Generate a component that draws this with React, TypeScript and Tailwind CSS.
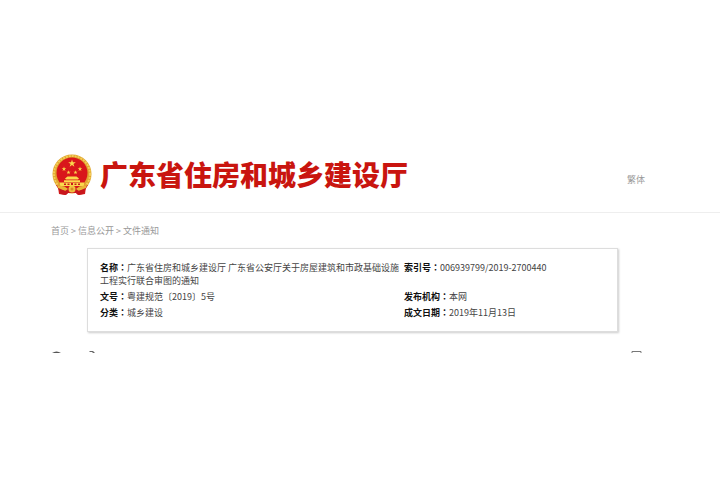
import React from 'react';

interface FieldProps {
    label: string;
    children: React.ReactNode;
}

const Field: React.FC<FieldProps> = ({ label, children }) => (
    <div>
        <dt className="inline font-bold text-[#111111]">
            {label}
            <span className="font-['Noto_Sans_CJK_TC',sans-serif]" lang="zh-TW">：</span>
        </dt>
        <dd className="inline">{children}</dd>
    </div>
);

const STAR = 'M0 -1 .23 -.31 .95 -.31 .36 .12 .59 .81 0 .38 -.59 .81 -.36 .12 -.95 -.31 -.23 -.31Z';

const Emblem: React.FC = () => (
    <svg className="h-[43px] w-10 shrink-0" viewBox="0 0 40 43" aria-hidden="true">
        <circle cx="20" cy="21" r="19.5" fill="#e0a42e" />
        <circle cx="20" cy="21" r="18" fill="none" stroke="#f3cd58" strokeWidth="2" strokeDasharray="2 1" />
        <path d="M6 34h28l-1 7-6 1-3-2h-8l-3 2-6-1Z" fill="#cf1a1c" />
        <circle cx="20" cy="20" r="15.5" fill="#d9161b" />
        <g fill="#fbd94d">
            <path d={STAR} transform="translate(20 10.5) scale(4)" />
            <path d={STAR} transform="translate(12 16) scale(2.4)" />
            <path d={STAR} transform="translate(16.5 19.5) scale(2.2)" />
            <path d={STAR} transform="translate(23.5 19.5) scale(2.2)" />
            <path d={STAR} transform="translate(28 16) scale(2.4)" />
            <path d="M13 25.500 15.500 23.500h9l2.500 2-1 1H14ZM12 27.200h16V29H12ZM8 29.500h24V33H8Z" />
        </g>
        <path d="M12 30.500h2V32h-2Zm3.500 0h2V32h-2Zm3.500-.5h2v2h-2Zm3.500.5h2V32h-2Zm3.500 0h2V32h-2Z" fill="#c8161d" />
        <path d="M4 32c5 1 9 2 12 3h8c3-1 7-2 12-3l-3 5-9 1-4-1-4 1-9-1Z" fill="#c8161d" />
        <path d="M5 32c6 1 9 2 11 4l-3 2c-2-1-4-2-7-3ZM35 32c-6 1-9 2-11 4l3 2c2-1 4-2 7-3Z" fill="#e9b536" />
        <circle cx="20" cy="36" r="3.500" fill="#f0c040" />
        <circle cx="20" cy="36" r="1.500" fill="#d98a24" />
        <path d="M8 37c4 0 6 1 9 2l-3 3-5-1ZM32 37c-4 0-6 1-9 2l3 3 5-1Z" fill="#c8161d" />
    </svg>
);

export default function App() {
    return (
        <div className="min-h-screen bg-white pt-[153px] font-['Noto_Sans_CJK_SC',sans-serif] text-[9px] leading-[13px] text-[#444444]">
            <header className="flex h-[60px] items-start justify-between border-b border-[#eeeeee] pr-[75px] pl-[52px]">
                <div className="flex items-center gap-2">
                    <Emblem />
                    <h1 className="text-[28px] leading-[43px] font-black text-[#c9150f]">广东省住房和城乡建设厅</h1>
                </div>
                <a href="#" className="mt-5 text-[#999999]">繁体</a>
            </header>

            <main className="pr-[66px] pl-[51px]">
                <nav className="flex gap-[2px] pt-[11px] text-[#999999]">
                    <a href="#">首页</a>
                    <span>&gt;</span>
                    <a href="#">信息公开</a>
                    <span>&gt;</span>
                    <a href="#">文件通知</a>
                </nav>

                <dl className="mx-9 mt-[11px] grid grid-cols-[304px_1fr] gap-y-[3px] border border-[#dddddd] py-3 pl-3 shadow-[1px_1px_2px_#cccccc]">
                    <Field label="名称">
                        广东省住房和城乡建设厅 广东省公安厅关于房屋建筑和市政基础设施工程实行联合审图的通知
                    </Field>
                    <Field label="索引号">006939799/2019-2700440</Field>
                    <Field label="文号">粤建规范〔2019〕5号</Field>
                    <Field label="发布机构">本网</Field>
                    <Field label="分类">城乡建设</Field>
                    <Field label="成文日期">2019年11月13日</Field>
                </dl>

                {/* top edge of the toolbar icons */}
                <div className="mt-[19px] flex justify-between pr-3">
                    <div className="flex gap-[27px]">
                        <svg className="h-[2px] w-[11px]" viewBox="0 0 11 2" aria-hidden="true">
                            <path d="M1 2Q5.500-1 10 2Z" fill="#555555" />
                        </svg>
                        <svg className="h-[2px] w-[6px]" viewBox="0 0 6 2" aria-hidden="true">
                            <path d="M1 0h3l2 2H4L3 1H0Z" fill="#666666" />
                        </svg>
                    </div>
                    <svg className="h-[2px] w-[11px]" viewBox="0 0 11 2" aria-hidden="true">
                        <path d="M1 2V.5h9V2" fill="none" stroke="#777777" />
                    </svg>
                </div>
            </main>
        </div>
    );
}
